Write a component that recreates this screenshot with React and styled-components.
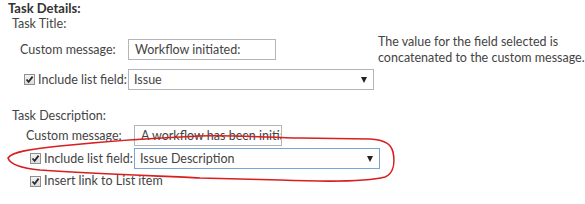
import React from "react";
import styled, { createGlobalStyle } from "styled-components";

const GlobalStyle = createGlobalStyle`
  html, body {
    margin: 0;
    padding: 0;
    background: #ffffff;
  }
  body {
    font-family: Lato, "Open Sans", sans-serif;
    font-size: 12.5px;
    color: #444444;
  }
`;

const Page = styled.div`
  position: relative;
  width: 585px;
  height: 204px;
  overflow: hidden;
  padding-left: 8px;
  box-sizing: border-box;
`;

const Heading = styled.div`
  font-weight: 700;
  font-size: 13px;
  line-height: 16px;
  color: #333333;
`;

const SectionTitle = styled.div`
  padding-left: 4px;
  line-height: 16px;
  margin-top: ${(p) => p.$top || 0}px;
`;

const FieldGrid = styled.div`
  display: grid;
  grid-template-columns: 108px auto 1fr;
  grid-auto-rows: 21px;
  row-gap: ${(p) => p.$gap}px;
  margin-top: ${(p) => p.$top}px;
  padding-left: ${(p) => p.$indent}px;
`;

const Label = styled.label`
  display: flex;
  align-items: center;
  gap: 3px;
  padding-left: ${(p) => (p.$check ? 4 : 0)}px;
  line-height: 21px;
  white-space: nowrap;
`;

const TextBox = styled.div`
  width: 148px;
  height: 21px;
  box-sizing: border-box;
  border: 1px solid #b5b5b5;
  padding: 0 6px;
  line-height: 19px;
  white-space: nowrap;
  overflow: hidden;
  color: #444444;
`;

const Select = styled.div`
  width: 246px;
  height: 21px;
  box-sizing: border-box;
  border: 1px solid ${(p) => (p.$focused ? "#76a7dc" : "#b5b5b5")};
  padding: 0 5px;
  line-height: 19px;
  display: flex;
  align-items: center;
  justify-content: space-between;
  color: #444444;
`;

const Arrow = styled.span`
  width: 0;
  height: 0;
  border-left: 3px solid transparent;
  border-right: 3px solid transparent;
  border-top: 6px solid #222222;
  margin-right: 1px;
`;

const Note = styled.div`
  grid-column: 3;
  grid-row: 1 / span 2;
  align-self: start;
  margin-top: -5px;
  padding-left: 4px;
  line-height: 16px;
  white-space: nowrap;
`;

const CheckRow = styled.label`
  grid-column: 1 / span 3;
  display: flex;
  align-items: center;
  gap: 3px;
  padding-left: 4px;
  line-height: 16px;
  height: 16px;
  margin-top: 2px;
`;

const Box = styled.span`
  display: inline-flex;
  align-items: center;
  justify-content: center;
  width: 11px;
  height: 11px;
  box-sizing: border-box;
  border: 1px solid #8f8f8f;
  background: linear-gradient(#f4f4f4, #dcdcdc);
  flex: none;
`;

const Checkbox = () => (
  <Box>
    <svg width="9" height="9" viewBox="0 0 9 9">
      <path d="M1.5 4.5 L3.6 6.8 L7.6 1.6" fill="none" stroke="#2b2b2b" strokeWidth="1.8" />
    </svg>
  </Box>
);

const Annotation = styled.svg`
  position: absolute;
  left: 0;
  top: 0;
  pointer-events: none;
`;

export default function App() {
  return (
    <>
      <GlobalStyle />
      <Page>
        <Heading>Task Details:</Heading>
        <SectionTitle>Task Title:</SectionTitle>
        <FieldGrid $indent={12} $top={7} $gap={9}>
          <Label>Custom message:</Label>
          <TextBox>Workflow initiated:</TextBox>
          <Note>
            The value for the field selected is
            <br />
            concatenated to the custom message.
          </Note>
          <Label $check>
            <Checkbox />
            Include list field:
          </Label>
          <Select>
            Issue
            <Arrow />
          </Select>
        </FieldGrid>

        <SectionTitle $top={18}>Task Description:</SectionTitle>
        <FieldGrid $indent={18} $top={1} $gap={2}>
          <Label>Custom message:</Label>
          <TextBox>A workflow has been initiated</TextBox>
          <span />
          <Label $check>
            <Checkbox />
            Include list field:
          </Label>
          <Select $focused>
            Issue Description
            <Arrow />
          </Select>
          <span />
          <CheckRow>
            <Checkbox />
            Insert link to List item
          </CheckRow>
        </FieldGrid>

        <Annotation width="585" height="204" viewBox="0 0 585 204">
          <path
            d="M200 136 C150 138 100 142 60 146 C30 149 12 152 8 158 C10 164 20 168 40 170 C100 174 160 176 200 178 L280 180 C330 182 370 181 385 177 C394 173 395 162 393 152 C391 144 385 140 370 139 L300 138 C260 137 230 135 196 136"
            fill="none"
            stroke="#d81f1f"
            strokeWidth="1.6"
            strokeLinecap="round"
          />
        </Annotation>
      </Page>
    </>
  );
}
